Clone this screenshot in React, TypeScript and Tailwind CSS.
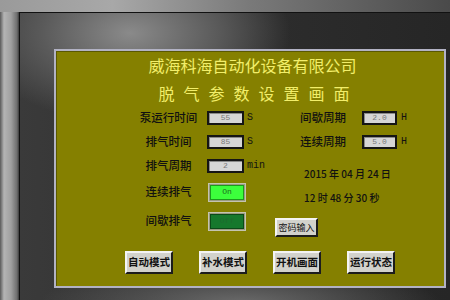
const cjk = { fontFamily: '"Noto Sans CJK SC", "Noto Sans", sans-serif' };
const mono = { fontFamily: '"Liberation Mono", "DejaVu Sans Mono", monospace' };

function ValueBox({ value, w }: { value: string; w: string }) {
  return (
    <div className={`${w} h-[14px] border-2 border-[#151515] bg-[#d6d6d6] shadow-[inset_1px_1px_0_#8a8a8a] flex items-center justify-center`}>
      <span className="text-[8px] leading-none text-[#7a7a7a]" style={mono}>
        {value}
      </span>
    </div>
  );
}

function ParamRow({ label, value, unit, h }: { label: string; value: string; unit: string; h: string }) {
  return (
    <div className={`flex items-center ${h}`}>
      <span className="w-[59px] text-center text-[11.5px] font-medium leading-none text-[#111]" style={cjk}>
        {label}
      </span>
      <div className="ml-[9px]">
        <ValueBox value={value} w="w-[37px]" />
      </div>
      <span className="ml-[3px] text-[10px] leading-none text-[#111]" style={mono}>
        {unit}
      </span>
    </div>
  );
}

function Toggle({ label, on, h }: { label: string; on: boolean; h: string }) {
  return (
    <div className={`flex items-center ${h}`}>
      <span className="w-[59px] text-center text-[11.5px] font-medium leading-none text-[#111]" style={cjk}>
        {label}
      </span>
      <div className="ml-[10px] w-[38px] h-[19px] border border-[#c4c4b0] bg-[#9a9a80] p-px">
        <div
          className={`w-full h-full flex items-center justify-center border ${
            on ? "bg-[#3cff3c] border-[#1c9a1c]" : "bg-[#16782c] border-[#0c4a18]"
          }`}
        >
          <span className={`text-[8px] leading-none ${on ? "text-[#1d6a1d]" : "text-[#1e6a2e]"}`} style={mono}>
            {on ? "On" : "Off"}
          </span>
        </div>
      </div>
    </div>
  );
}

function HmiButton({ label, w, h, size }: { label: string; w: string; h: string; size: string }) {
  return (
    <div
      className={`${w} ${h} flex items-center justify-center bg-[#d2d2cc] border-2 border-t-[#f4f4f4] border-l-[#f4f4f4] border-b-[#1c1c1c] border-r-[#1c1c1c]`}
    >
      <span className={`${size} leading-none text-[#111]`} style={cjk}>
        {label}
      </span>
    </div>
  );
}

export default function App() {
  return (
    <div className="w-[450px] h-[300px] overflow-hidden flex flex-col bg-[#6a6a6a]">
      <div className="h-[12px] bg-[linear-gradient(to_right,#9a9a9a,#a8a8a8_25%,#7a7a7a_55%,#4a4a4a)]" />
      <div className="flex flex-1">
        <div className="w-[19px] bg-[linear-gradient(to_right,#5a5a5a_0px,#b4b4b4_4px,#a0a0a0_11px,#6e6e6e_17px,#3a3a3a_19px)]" />
        <div className="flex-1 border-l border-t border-[#111] pl-[34px] pt-[36px] bg-[radial-gradient(ellipse_160px_90px_at_110px_20px,#8a8a8a_0%,#5a5a5a_55%,transparent_100%),radial-gradient(ellipse_200px_40px_at_220px_290px,#6a6a6a_0%,transparent_100%),linear-gradient(to_right,#3a3a3a,#2c2c2c_60%,#262626)]">
          <div className="w-[392px] h-[239px] border-2 border-[#b2b2c4] bg-[#858000] shadow-[inset_1px_1px_0_#5a5800] flex flex-col">
            <div className="mt-[4px] h-[20px] pl-[5px] text-center text-[16px] leading-[20px] text-[#f2ee6a]" style={cjk}>
              威海科海自动化设备有限公司
            </div>
            <div className="mt-[8px] h-[20px] pl-[17px] text-center text-[16px] leading-[20px] tracking-[9px] text-[#f2ee6a]" style={cjk}>
              脱气参数设置画面
            </div>

            <div className="mt-[3px] flex">
              <div className="w-[219px] pl-[83px] flex flex-col">
                <ParamRow label="泵运行时间" value="55" unit="S" h="h-[24px]" />
                <ParamRow label="排气时间" value="85" unit="S" h="h-[24px]" />
                <ParamRow label="排气周期" value="2" unit="min" h="h-[24px]" />
                <Toggle label="连续排气" on h="h-[28px]" />
                <Toggle label="间歇排气" on={false} h="h-[30px]" />
              </div>

              <div className="flex flex-col">
                {[
                  ["间歇周期", "2.0"],
                  ["连续周期", "5.0"],
                ].map(([label, value]) => (
                  <div key={label} className="flex items-center h-[24px] pl-[25px]">
                    <span className="w-[47px] text-[11.5px] font-medium leading-none text-[#111]" style={cjk}>
                      {label}
                    </span>
                    <div className="ml-[15px]">
                      <ValueBox value={value} w="w-[35px]" />
                    </div>
                    <span className="ml-[4px] text-[10px] leading-none text-[#111]" style={mono}>
                      H
                    </span>
                  </div>
                ))}
                <div className="mt-[8px] h-[24px] pl-[29px] flex items-center text-[10px] font-medium leading-none text-[#111] whitespace-pre" style={cjk}>
                  2015 年 04 月 24 日
                </div>
                <div className="h-[24px] pl-[29px] flex items-center text-[10px] font-medium leading-none text-[#111] whitespace-pre" style={cjk}>
                  12 时 48 分 30 秒
                </div>
                <div className="mt-[8px]">
                  <HmiButton label="密码输入" w="w-[43px]" h="h-[19px]" size="text-[9px]" />
                </div>
              </div>
            </div>

            <div className="mt-[14px] pl-[69px] flex gap-[26px]">
              {["自动模式", "补水模式", "开机画面", "运行状态"].map((b) => (
                <HmiButton key={b} label={b} w="w-[48px]" h="h-[23px]" size="text-[10.5px] font-bold" />
              ))}
            </div>
          </div>
        </div>
      </div>
    </div>
  );
}
